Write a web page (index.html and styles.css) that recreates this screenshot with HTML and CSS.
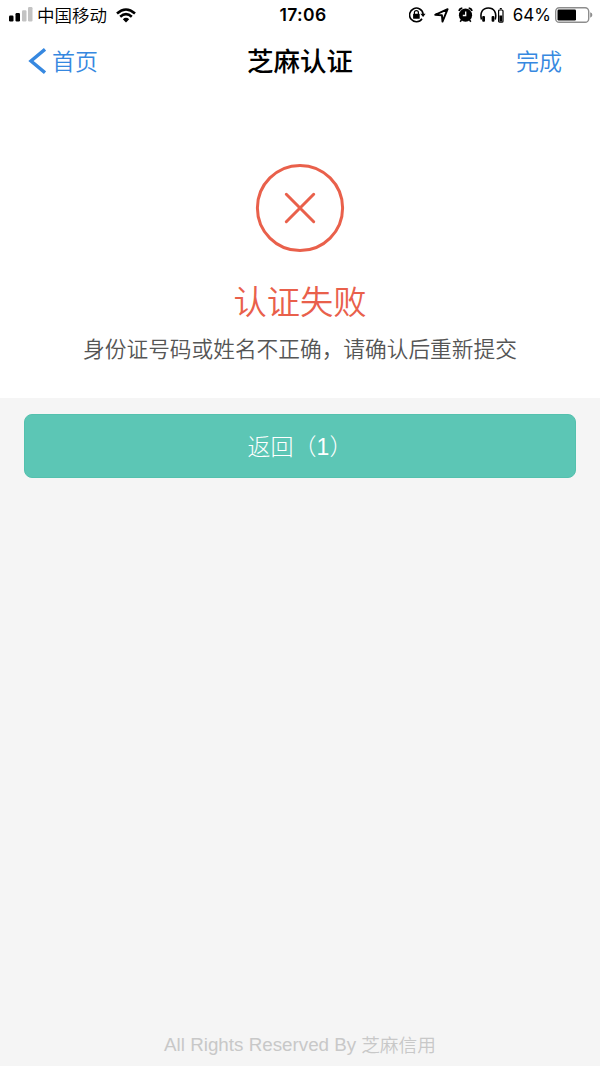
FILE: index.html
```html
<!DOCTYPE html>
<html lang="zh-CN">
<head>
<meta charset="utf-8">
<title>芝麻认证</title>
<link rel="stylesheet" href="styles.css">
</head>
<body>
<header class="top">
  <div class="status">
    <div class="status-left">
      <svg class="signal" width="24" height="16" viewBox="0 0 24 16">
        <rect x="0" y="8.5" width="4.5" height="6" rx="1.2"/>
        <rect x="6.5" y="6" width="4.5" height="8.5" rx="1.2"/>
        <rect class="dim" x="13" y="3.2" width="4.5" height="11.3" rx="1.2"/>
        <rect class="dim" x="19" y="0" width="4.5" height="14.5" rx="1.2"/>
      </svg>
      <span class="carrier">中国移动</span>
      <svg class="wifi" width="20" height="15" viewBox="0 0 20 15">
        <path class="arc" d="M1 5.4Q10-2.4 19 5.4M4.2 8.7Q10 3.5 15.8 8.7"/>
        <path d="M6.8 11.2Q10 8.3 13.2 11.2L10 14.6Z"/>
      </svg>
    </div>
    <span class="clock">17:06</span>
    <div class="status-right">
      <svg class="lock" width="17" height="16" viewBox="0 0 17 16">
        <path class="line" d="M13 11.7A6.8 6.8 0 1 1 14.1 7"/>
        <path d="M11.4 6.7H16.6L14.1 10Z"/>
        <rect x="4.1" y="6.8" width="6.6" height="5" rx=".6"/>
        <path class="line thin" d="M5.4 7.3V5.6a2 2 0 0 1 4 0v1.7"/>
      </svg>
      <svg class="arrow" width="15" height="15" viewBox="0 0 15 15">
        <path class="line" d="M1.2 6.8 13.6 1.2 8.5 13.6 7.9 7.2Z"/>
      </svg>
      <svg class="alarm" width="15" height="16" viewBox="0 0 15 16">
        <circle cx="7.5" cy="8.2" r="6.6"/>
        <path class="line" d="M1 4Q1.5 1.5 4.3 1.1M14 4Q13.5 1.5 10.7 1.1M3.5 12.9 2.2 14.7M11.5 12.9l1.3 1.8"/>
        <path class="hand" d="M7.7 4.6V8.5H4.8"/>
      </svg>
      <svg class="phones" width="17" height="16" viewBox="0 0 17 16">
        <path class="line" d="M1.5 12.5C-.4 5.5 2.7 1 8.3 1s8.8 4.5 6.9 11.5"/>
        <rect x="2.2" y="9" width="2.8" height="5.8" rx="1"/>
        <rect x="11.6" y="9" width="2.8" height="5.8" rx="1"/>
      </svg>
      <svg class="cell" width="6" height="15" viewBox="0 0 6 15">
        <rect class="line thin" x=".6" y="2" width="4.4" height="12.2" rx="1"/>
        <rect x="1.8" y="0" width="2" height="1.3"/>
        <rect x="1.4" y="7.5" width="2.8" height="6"/>
      </svg>
      <span class="percent">64%</span>
      <svg class="battery" width="38" height="16" viewBox="0 0 38 16">
        <rect class="case" x=".7" y=".7" width="33" height="14.6" rx="3.6"/>
        <rect x="2.5" y="2.5" width="18.5" height="11" rx="1.2"/>
        <path class="tip" d="M35.2 5.3q2.2.8 2.2 2.7t-2.2 2.7Z"/>
      </svg>
    </div>
  </div>
  <nav class="nav">
    <a class="back">
      <svg width="18" height="26" viewBox="0 0 18 26"><path d="M17 1.4 3 13 17 24.6"/></svg>
      <span>首页</span>
    </a>
    <h1 class="title">芝麻认证</h1>
    <a class="done">完成</a>
  </nav>
</header>
<main class="page">
  <section class="result">
    <svg class="fail" width="90" height="90" viewBox="0 0 90 90">
      <circle cx="45" cy="45" r="42.6"/>
      <path d="M31.3 31.3 58.7 58.7M58.7 31.3 31.3 58.7"/>
    </svg>
    <h2 class="headline">认证失败</h2>
    <p class="reason">身份证号码或姓名不正确，请确认后重新提交</p>
  </section>
  <button class="return">返回（1）</button>
</main>
<footer class="footer"><span class="rights">All Rights Reserved By</span><span class="brand">芝麻信用</span></footer>
</body>
</html>
```
FILE: styles.css
```css
* { box-sizing: border-box; }
body {
  margin: 0;
  height: 1066px;
  display: flex;
  flex-direction: column;
  overflow: hidden;
  background: #f5f5f5;
  font-family: "Noto Sans CJK SC", sans-serif;
}
svg { display: block; flex: none; }
.top { background: #fff; height: 92px; }
.status {
  display: grid;
  grid-template-columns: 1fr auto 1fr;
  align-items: center;
  height: 30px;
  padding: 0 7px 0 9px;
  color: #000;
}
.status-left, .status-right { display: flex; align-items: center; height: 30px; }
.status-right { justify-content: flex-end; }
.signal .dim { fill: #c3c3c3; }
.carrier { font-size: 17.5px; line-height: 30px; margin-left: 4px; font-weight: 350; }
.wifi { margin-left: 9px; }
.wifi .arc { fill: none; stroke: #000; stroke-width: 2.6; }
.clock { font: 600 17.5px/28px Inter, sans-serif; letter-spacing: .4px; padding-left: 4px; }
.line { fill: none; stroke: #000; stroke-width: 1.6; stroke-linejoin: round; }
.arrow .line { stroke-width: 1.9; }
.line.thin { stroke-width: 1.2; }
.hand { fill: none; stroke: #fff; stroke-width: 1.3; }
.arrow { margin-left: 8px; }
.alarm { margin-left: 9px; }
.phones { margin-left: 7px; }
.cell { margin-left: 1px; }
.percent { font: 400 17px/30px Inter, sans-serif; margin: 0 4px 0 9px; }
.case { fill: #fff; stroke: #8d8d8d; stroke-width: 1.4; }
.tip { fill: #8d8d8d; }
.nav {
  display: grid;
  grid-template-columns: 1fr auto 1fr;
  align-items: center;
  height: 60px;
  padding: 0 28px;
}
.back { display: flex; align-items: center; gap: 6px; margin-top: 2px; }
.back path { fill: none; stroke: #3688e0; stroke-width: 3.4; }
.back, .done { font-size: 23px; font-weight: 350; line-height: 34px; color: #3688e0; }
.back span { margin-top: -2px; }
.done { text-align: right; padding-right: 10px; }
.title { margin: 0; font-size: 26.5px; line-height: 36px; font-weight: 500; color: #000; }
.page { flex: 1; }
.result {
  display: flex;
  flex-direction: column;
  align-items: center;
  height: 306px;
  padding-top: 71px;
  background: #fff;
}
.fail { fill: none; stroke: #e9604b; stroke-width: 3; stroke-linecap: round; }
.headline { margin: 24px 0 0; font-size: 33.3px; line-height: 46px; font-weight: 350; color: #e9604b; }
.reason { margin: 10px 0 0; font-size: 21.7px; line-height: 30px; font-weight: 350; color: #555; }
.return {
  display: block;
  width: 552px;
  height: 64px;
  margin: 16px auto 0;
  padding: 0 0 2px;
  border: 1px solid #54c1ae;
  border-radius: 8px;
  background: #5cc6b5;
  color: #fff;
  font-family: "Liberation Sans", "Noto Sans CJK SC", sans-serif;
  font-size: 23px;
  font-weight: 300;
}
.footer {
  display: flex;
  justify-content: center;
  align-items: center;
  gap: 5px;
  height: 44px;
  color: #c8c8c8;
  font-size: 18.7px;
  font-weight: 350;
}
.rights { font-family: "Liberation Sans", sans-serif; font-size: 18.8px; font-weight: 400; padding-top: 2px; }
.brand { margin-top: -2px; }
```
